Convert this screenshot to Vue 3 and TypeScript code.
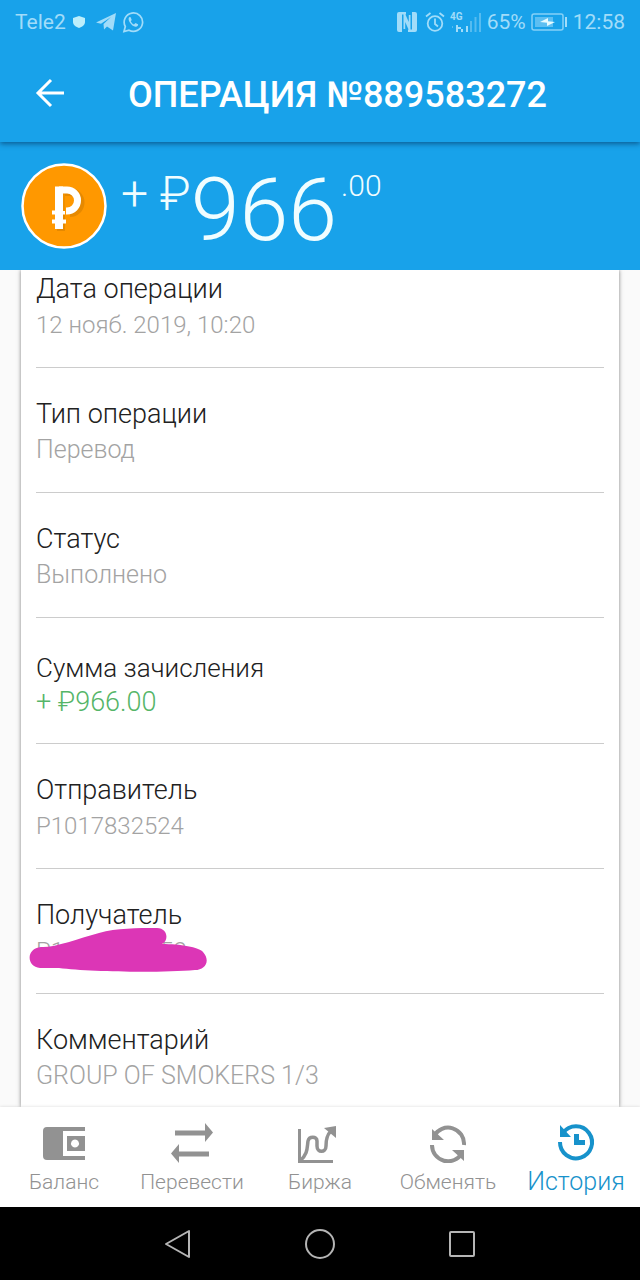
<script setup lang="ts">
interface Detail {
  label: string
  value: string
  kind?: 'credit' | 'numeric' | 'numeric redacted'
  tail?: string
}

const details: Detail[] = [
  { label: 'Дата операции', value: '12 нояб. 2019, 10:20', kind: 'numeric' },
  { label: 'Тип операции', value: 'Перевод' },
  { label: 'Статус', value: 'Выполнено' },
  { label: 'Сумма зачисления', value: '+ ₽966.00', kind: 'credit' },
  { label: 'Отправитель', value: 'P1017832524', kind: 'numeric' },
  { label: 'Получатель', value: 'P1', tail: '52', kind: 'numeric redacted' },
  { label: 'Комментарий', value: 'GROUP OF SMOKERS 1/3' },
]

const tabs = [
  { id: 'balance', label: 'Баланс' },
  { id: 'transfer', label: 'Перевести' },
  { id: 'market', label: 'Биржа' },
  { id: 'exchange', label: 'Обменять' },
  { id: 'history', label: 'История' },
]
const active = 'history'
</script>

<template>
  <div class="screen">
    <header class="top">
      <div class="status">
        <div class="status-side">
          <span>Tele2</span>
          <svg class="shield" width="14" height="14" viewBox="0 0 14 14"><path d="M7 1 13 3v4c0 3-3 5-6 6C4 12 1 10 1 7V3z" fill="#bdeefb" /></svg>
          <svg class="plane" width="20" height="18" viewBox="0 0 20 18"><path d="M0 9.500 20 0l-3 17.500-6-4-3 3-.5-5.500L15 4 5 10.800z" fill="currentColor" /></svg>
          <svg width="22" height="22" viewBox="0 0 22 22"><path d="M2 20.500 3.300 15.500A9.200 9.200 0 1 1 7 19.200z" fill="none" stroke="currentColor" stroke-width="1.700" /><path d="M7.500 6c-3 2 2 9.500 6 9.800 2 .1 3-1.500 2.500-2.500l-2.500-1.200-1.500 1.400c-1.500-.6-2.500-1.700-3.200-3.200L9.700 9 8.700 6.300z" fill="currentColor" /></svg>
        </div>
        <div class="status-side right">
          <svg class="nfc" width="20" height="20" viewBox="0 0 20 20"><path d="M2 0h7v2.500H5V20H2a2 2 0 0 1-2-2V2a2 2 0 0 1 2-2zM18 20h-7v-2.500h4V0h3a2 2 0 0 1 2 2v16a2 2 0 0 1-2 2z" fill="currentColor" /><path d="M6.500 17V2h1.700l3.600 8V3h1.700v15h-1.700l-3.600-8v7z" fill="currentColor" /></svg>
          <svg class="alarm" width="20" height="20" viewBox="0 0 20 20"><g fill="none" stroke="currentColor" stroke-width="1.800"><circle cx="10" cy="11.500" r="7.300" /><path d="M1 4.500 5.500 1M19 4.500 14.500 1M10 6.500V12l3 2.500" /></g></svg>
          <svg class="signal" width="32" height="21" viewBox="0 0 32 21"><text x="0" y="8" font-size="10" font-weight="700" fill="currentColor">4G</text><path d="M6 13h2v2h3v2H8v3H6zM11 17h2v3h-2zM16 14h2v6h-2z" fill="currentColor" /><path d="M2 14h1v2H2zM20 9h2v11h-2zM24.500 5h2v15h-2zM29 1h2v19h-2z" fill="currentColor" opacity=".45" /></svg>
          <span>65%</span>
          <svg class="battery" width="36" height="18" viewBox="0 0 36 18"><rect x="1" y="1" width="31" height="16" rx="2" fill="none" stroke="currentColor" stroke-width="1.500" opacity=".8" /><path d="M4 4h18v10H4z" fill="currentColor" opacity=".5" /><path d="m9 9 7 .8V13l8-4-7-.8V5z" fill="#e6fbff" /><path d="M34 4h2v10h-2z" fill="currentColor" /></svg>
          <span>12:58</span>
        </div>
      </div>
      <div class="title-bar">
        <button class="back" type="button" aria-label="Назад">
          <svg width="30" height="30" viewBox="0 0 30 30"><path d="M29 15H3M16 2 3 15l13 13" fill="none" stroke="currentColor" stroke-width="3" /></svg>
        </button>
        <h1>ОПЕРАЦИЯ №889583272</h1>
      </div>
    </header>

    <section class="summary">
      <svg class="coin" width="86" height="86" viewBox="0 0 86 86">
        <circle cx="43" cy="43" r="41.500" fill="#ff9800" stroke="#fff" stroke-width="2.500" />
        <g fill="none" stroke="#b86e00" opacity=".35" transform="translate(2 2)"><path d="M38 66V24M39 27h8a10.500 10.500 0 0 1 0 21" stroke-width="8" /></g>
        <g fill="none" stroke="#fff"><path d="M38 66V23.500" stroke-width="8" /><path d="M38 27h8a10.500 10.500 0 0 1 0 21h-1" stroke-width="7" /><path d="M31 49.500h13M31 58.500h14" stroke-width="4" /></g>
        <path d="M43 31v17" stroke="#f09000" stroke-width="2" />
      </svg>
      <p class="amount"><span class="sign">+ ₽</span><span class="whole">966</span><span class="cents">.00</span></p>
    </section>

    <main class="content">
      <dl class="card">
        <div v-for="d in details" :key="d.label" class="row" :class="d.kind">
          <dt>{{ d.label }}</dt>
          <dd>
            <span>{{ d.value }}</span>
            <span v-if="d.tail">{{ d.tail }}</span>
            <svg v-if="d.tail" class="scribble" width="180" height="46" viewBox="0 0 180 46"><path d="M12 20C25 21 48 12 70 6 88 1 108 1 128 1c11 0 12 13 5 16 18 0 37 3 41 8 8 9 2 18-8 18-35 3-105 2-136-2H11C-3 40-3 21 12 20z" fill="#dc36b6" /></svg>
          </dd>
        </div>
      </dl>
    </main>

    <nav class="tabs">
      <button v-for="t in tabs" :key="t.id" type="button" class="tab" :class="{ active: t.id === active }">
        <svg v-if="t.id === 'balance'" width="44" height="40" viewBox="0 0 44 40"><path d="M5 4h38v4H21v25h22v4H5a4 4 0 0 1-4-4V8a4 4 0 0 1 4-4z" fill="currentColor" /><path fill-rule="evenodd" d="M25 13h18v15H25zm8 3.500a4 4 0 1 0 .01 0z" fill="currentColor" /></svg>
        <svg v-else-if="t.id === 'transfer'" width="44" height="40" viewBox="0 0 44 40"><path d="M5 7.500h30V0l8 9.500-8 9.500v-6.500H5zM39 28.500H9V21l-8 9.500L9 40v-6.500h30z" fill="currentColor" /></svg>
        <svg v-else-if="t.id === 'market'" width="44" height="40" viewBox="3 0 44 40"><g fill="none" stroke="currentColor"><path d="M4.500 6v33M3 38.500h35" stroke-width="3" /><path d="M5 38c8-7 7-13 8-20 1-5 9-5 9 0v5c0 7 9 7 9 0 0-9 2-12 5-15" stroke-width="3.500" /></g><path d="m29 5 12-2v12z" fill="currentColor" /></svg>
        <svg v-else-if="t.id === 'exchange'" width="44" height="40" viewBox="0 0 44 40"><g fill="none" stroke="currentColor" stroke-width="4"><path d="M8 13a16 16 0 0 1 30 9M6 22a16 16 0 0 0 30 8" /></g><path d="M6 6v11h12zM38 38V27H26z" fill="currentColor" /></svg>
        <svg v-else width="44" height="40" viewBox="0 0 44 40"><path d="M9 10a16 16 0 1 1-3 9" fill="none" stroke="currentColor" stroke-width="4" /><path d="M6 2v12h11z" fill="currentColor" /><path d="M20 11h5v6h6v5H20z" fill="currentColor" /></svg>
        <span>{{ t.label }}</span>
      </button>
    </nav>

    <nav class="system">
      <button type="button" aria-label="Назад"><svg width="32" height="32" viewBox="0 0 32 32"><path d="M27 3v26L4 16z" /></svg></button>
      <button type="button" aria-label="Домой"><svg width="32" height="32" viewBox="0 0 32 32"><circle cx="16" cy="16" r="14" /></svg></button>
      <button type="button" aria-label="Недавние"><svg width="32" height="32" viewBox="0 0 32 32"><rect x="4" y="4" width="24" height="24" rx="1" /></svg></button>
    </nav>
  </div>
</template>

<style>
body {
  margin: 0;
  background: #000;
}
</style>

<style scoped>
.screen {
  display: flex;
  flex-direction: column;
  min-height: 100vh;
  font-family: Roboto, "Noto Sans", sans-serif;
  font-weight: 300;
  background: #fafafa;
}
button {
  padding: 0;
  border: 0;
  background: none;
  color: inherit;
  font: inherit;
}
svg {
  display: block;
  flex: none;
}
.top {
  position: relative;
  background: #18a2ea;
  color: #fff;
  box-shadow: 0 2px 5px rgba(0, 40, 80, 0.55);
}
.status {
  display: flex;
  justify-content: space-between;
  height: 44px;
  padding: 0 15px;
  color: #a1dcf9;
  font-size: 21px;
  font-weight: 400;
}
.status-side {
  display: flex;
  align-items: center;
  gap: 6px;
}
.status-side.right {
  gap: 5px;
}
.plane {
  margin-left: 4px;
}
.nfc {
  margin-right: 3px;
}
.battery {
  margin-right: 1px;
}
.title-bar {
  display: flex;
  align-items: center;
  height: 98px;
  padding-left: 35px;
}
.back {
  display: flex;
  margin-right: 63px;
}
h1 {
  margin: 0;
  padding-top: 4px;
  font-size: 36px;
  line-height: 44px;
  font-weight: 500;
}
.summary {
  display: flex;
  align-items: center;
  gap: 14px;
  height: 128px;
  padding: 0 21px;
  background: #18a2ea;
  color: #f0fdff;
}
.amount {
  display: flex;
  align-items: flex-start;
  margin: 0;
  padding-top: 8px;
}
.sign {
  padding-top: 8px;
  font-size: 48px;
  line-height: 48px;
}
.whole {
  font-size: 88px;
  line-height: 96px;
}
.cents {
  margin-left: 4px;
  padding-top: 6px;
  font-size: 30px;
  line-height: 36px;
}
.content {
  flex: 1;
  padding: 0 21px;
  overflow: hidden;
}
.card {
  box-sizing: border-box;
  height: 100%;
  margin: 0;
  padding: 0 15px;
  background: #fff;
  box-shadow: 0 0 4px rgba(0, 0, 0, 0.5);
}
.row {
  box-sizing: border-box;
  height: 125px;
  padding-top: 28px;
  border-bottom: 1px solid #ccc;
}
.row:first-child {
  height: 98px;
  padding-top: 1px;
}
.row:last-child {
  height: 113px;
  border: 0;
}
.row.credit {
  height: 126px;
  padding-top: 33px;
}
dt {
  color: #212121;
  font-size: 27px;
  line-height: 36px;
}
dd {
  position: relative;
  margin: 0;
  color: #a3a3a3;
  font-size: 25px;
  line-height: 36px;
}
.numeric dd {
  font-size: 24px;
}
.credit dt {
  font-size: 26px;
  line-height: 34px;
}
.credit dd {
  color: #55b568;
  font-size: 27px;
  line-height: 34px;
}
.redacted dd {
  display: flex;
  gap: 96px;
}
.scribble {
  position: absolute;
  left: -7px;
  top: -6px;
}
.tabs {
  position: relative;
  display: grid;
  grid-template-columns: repeat(5, 1fr);
  height: 100px;
  background: #fff;
  box-shadow: 0 0 3px rgba(0, 0, 0, 0.15);
  color: #929292;
}
.tab {
  display: flex;
  flex-direction: column;
  align-items: center;
  gap: 6px;
  padding-top: 16px;
  font-size: 21px;
  line-height: 26px;
}
.tab.active {
  color: #1792cb;
  font-size: 25px;
}
.system {
  display: flex;
  justify-content: center;
  align-items: center;
  gap: 110px;
  height: 73px;
  background: #000;
}
.system svg {
  fill: none;
  stroke: #b5b5b5;
  stroke-width: 2;
  stroke-linejoin: round;
}
</style>
